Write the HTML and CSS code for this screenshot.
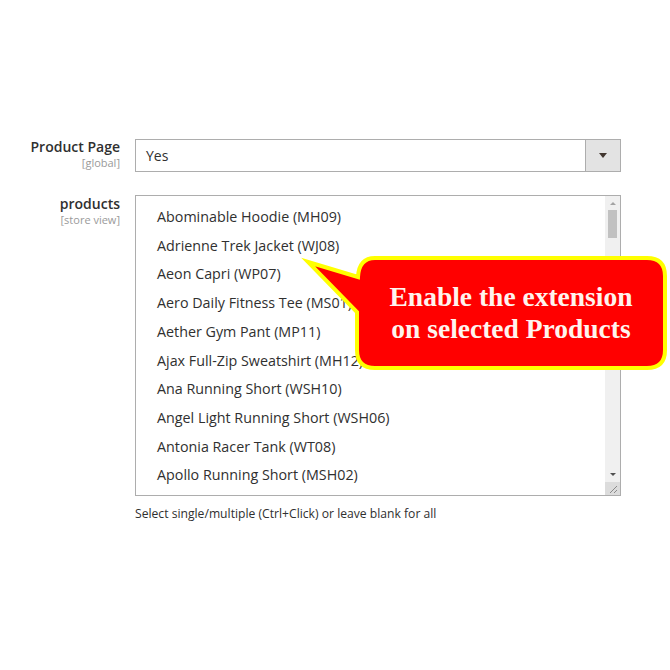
FILE: index.html
```html
<!DOCTYPE html>
<html>
<head>
<meta charset="utf-8">
<title>Product Page settings</title>
<link rel="stylesheet" href="styles.css">
</head>
<body>
<div class="config">
	<div class="field">
		<div class="label">
			<span class="name">Product Page</span>
			<span class="scope">[global]</span>
		</div>
		<div class="control">
			<div class="select">
				<span class="value">Yes</span>
				<span class="select-btn"><span class="arrow"></span></span>
			</div>
		</div>
	</div>

	<div class="field">
		<div class="label">
			<span class="name">products</span>
			<span class="scope">[store view]</span>
		</div>
		<div class="control">
			<div class="multiselect">
				<ul class="options">
					<li>Abominable Hoodie (MH09)</li>
					<li>Adrienne Trek Jacket (WJ08)</li>
					<li>Aeon Capri (WP07)</li>
					<li>Aero Daily Fitness Tee (MS01)</li>
					<li>Aether Gym Pant (MP11)</li>
					<li>Ajax Full-Zip Sweatshirt (MH12)</li>
					<li>Ana Running Short (WSH10)</li>
					<li>Angel Light Running Short (WSH06)</li>
					<li>Antonia Racer Tank (WT08)</li>
					<li>Apollo Running Short (MSH02)</li>
				</ul>
				<div class="scrollbar">
					<span class="sb-up"></span>
					<span class="sb-thumb"></span>
					<span class="sb-track"></span>
					<span class="sb-down"></span>
					<span class="sb-grip">
						<svg width="14" height="13" viewBox="0 0 14 13"><path d="M12 4 L5 11 M12 8 L9 11" stroke="#8a8a8a" stroke-width="1"/></svg>
					</span>
				</div>
			</div>
			<p class="note">Select single/multiple (Ctrl+Click) or leave blank for all</p>
		</div>
	</div>
</div>

<div class="callout">
	<svg class="bubble" width="370" height="125" viewBox="0 0 370 125">
		<path d="M75 8 H347 Q365 8 365 26 V100 Q365 118 347 118 H75 Q57 118 57 100 V62 L8 12 L58 27 Q59 8 75 8 Z" fill="#ff0000" stroke="#ffff00" stroke-width="4" stroke-miterlimit="20"/>
	</svg>
	<div class="callout-text">Enable the extension<br>on selected Products</div>
</div>
</body>
</html>
```

FILE: styles.css
```css
body {
	margin: 0;
	background-color: #ffffff;
	font-family: 'Open Sans', sans-serif;
	color: #303030;
	position: relative;
	height: 670px;
}
.config {
	padding-top: 138px;
	display: flex;
	flex-direction: column;
	gap: 23px;
}
.field {
	display: grid;
	grid-template-columns: 120px 486px;
	column-gap: 15px;
}
.label {
	display: flex;
	flex-direction: column;
	align-items: flex-end;
}
.name {
	font-size: 14px;
	font-weight: 600;
	line-height: 18px;
}
.scope {
	font-size: 11px;
	line-height: 13px;
	color: #9a9a9a;
}
.select {
	height: 33px;
	border: 1px solid #adadad;
	box-sizing: border-box;
	margin-top: 1px;
	display: flex;
	align-items: center;
	justify-content: space-between;
}
.value {
	font-size: 14px;
	padding-left: 10px;
}
.select-btn {
	width: 34px;
	height: 100%;
	background-color: #e3e3e3;
	border-left: 1px solid #adadad;
	display: flex;
	align-items: center;
	justify-content: center;
}
.arrow {
	width: 0;
	height: 0;
	border-left: 4px solid transparent;
	border-right: 4px solid transparent;
	border-top: 5px solid #41362f;
}
.multiselect {
	height: 301px;
	border: 1px solid #adadad;
	box-sizing: border-box;
	display: flex;
}
.options {
	flex: 1;
	list-style: none;
	margin: 0;
	padding: 7px 0 0 21px;
}
.options li {
	font-size: 14.3px;
	line-height: 28.7px;
	white-space: nowrap;
}
.scrollbar {
	width: 15px;
	background-color: #f0f0f0;
	display: flex;
	flex-direction: column;
	align-items: center;
}
.sb-up, .sb-down {
	width: 0;
	height: 0;
	border-left: 3px solid transparent;
	border-right: 3px solid transparent;
	margin: 6px 0 5px;
}
.sb-up {
	border-bottom: 3px solid #a3a3a3;
}
.sb-down {
	border-top: 3px solid #505050;
	margin: 5px 0 6px;
}
.sb-thumb {
	width: 9px;
	height: 28px;
	background-color: #c1c1c1;
}
.sb-track {
	flex: 1;
}
.sb-grip {
	width: 15px;
	height: 13px;
	background-color: #dcdcdc;
	display: flex;
}
.note {
	margin: 10px 0 0;
	font-size: 12.15px;
	line-height: 16px;
}
.callout {
	position: absolute;
	left: 300px;
	top: 250px;
	width: 370px;
	height: 125px;
}
.bubble {
	display: block;
}
.callout-text {
	position: absolute;
	left: 57px;
	top: 8px;
	width: 308px;
	height: 110px;
	display: flex;
	align-items: center;
	justify-content: center;
	text-align: center;
	font-family: 'Liberation Serif', serif;
	font-weight: bold;
	font-size: 27.5px;
	line-height: 32px;
	color: #fff4ee;
}
```
